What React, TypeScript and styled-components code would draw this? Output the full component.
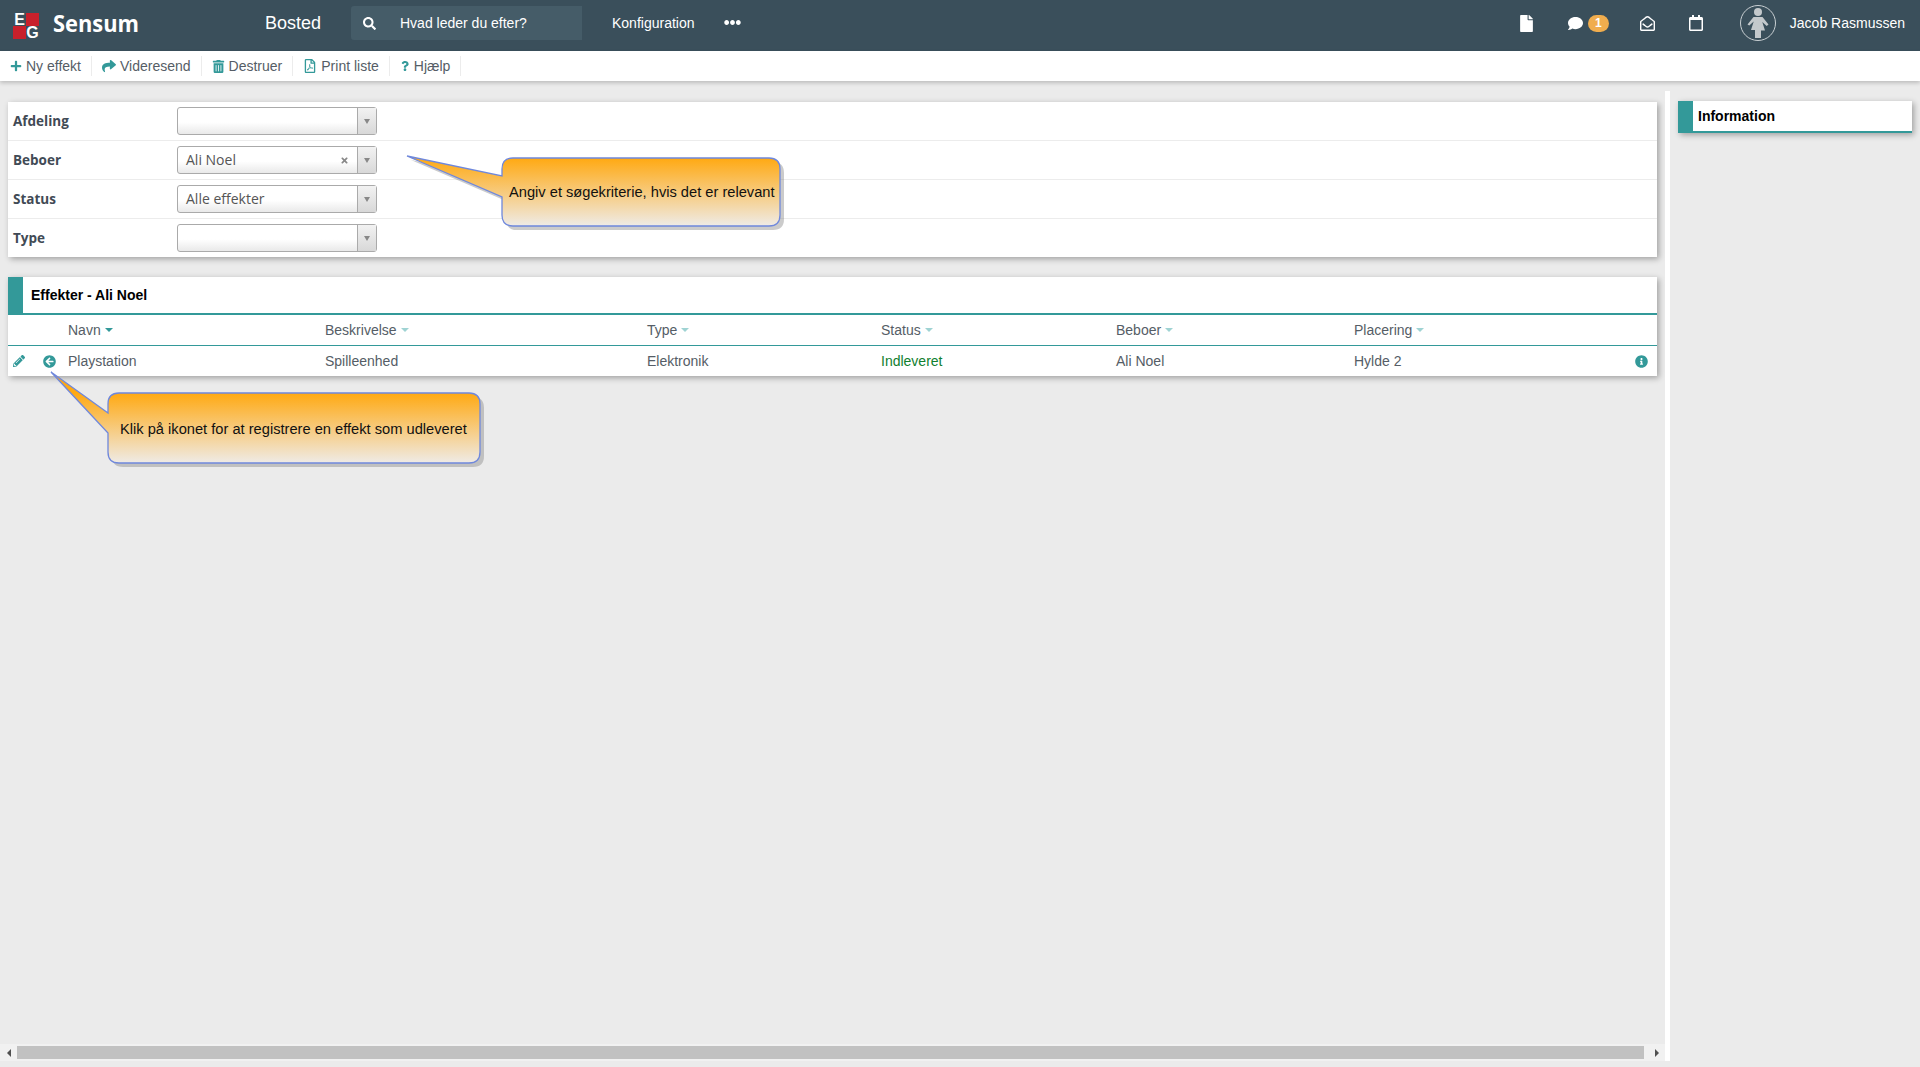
import { ReactNode } from "react"
import styled, { createGlobalStyle } from "styled-components"
import {
  FaArrowCircleLeft,
  FaComment,
  FaEllipsisH,
  FaFile,
  FaInfoCircle,
  FaPencilAlt,
  FaPlus,
  FaQuestion,
  FaRegCalendar,
  FaRegEnvelopeOpen,
  FaRegFilePdf,
  FaSearch,
  FaShare,
  FaTimes,
  FaTrashAlt
} from "react-icons/fa"

const TEAL = "#339999"
const TEXT = "#555d66"

const GlobalStyle = createGlobalStyle`
  html, body {
    margin: 0;
    padding: 0;
    background: #ebebeb;
    font-family: "Liberation Sans", Arial, sans-serif;
    font-size: 14px;
    overflow: hidden;
  }
  * { box-sizing: border-box; }
`

const Page = styled.div`
  position: relative;
  display: flex;
  flex-direction: column;
  width: 1920px;
  height: 1061px;
  background: #ebebeb;
`

const TopBar = styled.header`
  display: flex;
  align-items: center;
  flex: 0 0 51px;
  padding-bottom: 5px;
  background: #3a4f5b;
  color: #fff;
`

const Logo = styled.div`
  display: grid;
  grid-template-columns: 13px 13px;
  grid-template-rows: 13px 13px;
  margin: 5px 14px 0 13px;
`

const LogoCell = styled.span<{ $red?: boolean }>`
  display: flex;
  align-items: center;
  justify-content: center;
  background: ${p => (p.$red ? "#c8202b" : "transparent")};
  color: #fff;
  font: bold 16px "Liberation Sans", sans-serif;
  line-height: 13px;
`

const Brand = styled.span`
  width: 212px;
  font: bold 23px "Open Sans", sans-serif;
  transform: scaleX(0.95);
  transform-origin: left center;
`

const Module = styled.span`
  width: 86px;
  font-size: 18px;
`

const SearchBox = styled.div`
  display: flex;
  align-items: center;
  gap: 24px;
  width: 231px;
  height: 34px;
  padding-left: 12px;
  border-radius: 3px 0 0 3px;
  background: #455c68;
  font-size: 14px;
`

const NavLink = styled.span`
  margin-left: 30px;
  font-size: 14px;
`

const NavDots = styled.span`
  display: flex;
  margin-left: 29px;
  margin-bottom: 2px;
  font-size: 17px;
`

const NavRight = styled.div`
  display: flex;
  align-items: center;
  margin-left: auto;
  padding-right: 15px;
`

const NavIcon = styled.span<{ $gap: number }>`
  display: flex;
  margin-right: ${p => p.$gap}px;
  font-size: 15px;
`

const Badge = styled.span`
  display: flex;
  align-items: center;
  justify-content: center;
  width: 21px;
  height: 17px;
  margin-right: 31px;
  border-radius: 9px;
  background: #f0ad4e;
  font-size: 12px;
  font-weight: bold;
`

const Avatar = styled.span`
  display: flex;
  align-items: center;
  justify-content: center;
  width: 36px;
  height: 36px;
  margin-right: 14px;
  border: 1px solid #c9cfd3;
  border-radius: 50%;
`

const ToolBar = styled.nav`
  position: relative;
  z-index: 2;
  display: flex;
  align-items: center;
  flex: 0 0 30px;
  background: #fff;
  box-shadow: 0 2px 4px rgba(0, 0, 0, 0.2);
`

const ToolButton = styled.span`
  display: flex;
  align-items: center;
  gap: 4px;
  height: 20px;
  padding: 0 10px;
  border-right: 1px solid #ececec;
  color: ${TEXT};
  svg {
    color: ${TEAL};
  }
`

const Body = styled.div`
  display: flex;
  flex: 1;
  min-height: 0;
  padding-top: 10px;
`

const Main = styled.main`
  display: flex;
  flex-direction: column;
  flex: 0 0 1665px;
  padding-top: 11px;
`

const Side = styled.aside`
  flex: 1;
  margin-left: 5px;
  padding: 10px 8px 0 8px;
  box-shadow: -5px 0 0 #fff;
`

const Card = styled.section`
  width: 1649px;
  margin-left: 8px;
  background: #fff;
  box-shadow: 2px 2px 6px rgba(0, 0, 0, 0.32);
`

const FilterRow = styled.div`
  display: flex;
  align-items: center;
  height: 39px;
  padding-left: 5px;
  border-bottom: 1px solid #ececec;
  &:last-child {
    border-bottom: 0;
    height: 38px;
  }
`

const FilterLabel = styled.label`
  width: 164px;
  color: #414a55;
  font: bold 13.5px "Open Sans", sans-serif;
`

const Select = styled.div`
  display: flex;
  width: 200px;
  height: 28px;
  border: 1px solid #aaa;
  border-radius: 3px;
  background: linear-gradient(#fff 55%, #e9e9e9);
  color: #555;
  font: 14px "Open Sans", sans-serif;
`

const SelectValue = styled.span`
  flex: 1;
  align-self: center;
  padding: 0 0 2px 8px;
`

const SelectClear = styled.span`
  display: flex;
  align-self: center;
  margin-right: 8px;
  color: #888;
`

const SelectArrow = styled.span`
  display: flex;
  align-items: center;
  justify-content: center;
  width: 19px;
  border-left: 1px solid #aaa;
  background: linear-gradient(#f2f2f2, #d8d8d8);
  &::after {
    content: "";
    border-style: solid;
    border-width: 5px 3px 0;
    border-color: #888 transparent transparent;
  }
`

const TableCard = styled(Card)`
  margin-top: 20px;
`

const CardHeader = styled.h2`
  display: flex;
  align-items: center;
  height: 38px;
  margin: 0;
  padding-left: 8px;
  border-left: 15px solid ${TEAL};
  border-bottom: 2px solid ${TEAL};
  color: #000;
  font-size: 14px;
  font-weight: bold;
`

const TableRow = styled.div<{ $head?: boolean }>`
  display: grid;
  grid-template-columns: 30px 30px 257px 322px 234px 235px 238px 1fr 27px;
  align-items: center;
  height: ${p => (p.$head ? "31px" : "30px")};
  border-bottom: ${p => (p.$head ? `1px solid ${TEAL}` : "0")};
  color: ${TEXT};
`

const RowIcon = styled.span`
  display: flex;
  padding-left: 5px;
  color: ${TEAL};
`

const SortHead = styled.span<{ $active?: boolean }>`
  display: flex;
  align-items: center;
  gap: 4px;
  &::after {
    content: "";
    border-style: solid;
    border-width: 4px 4.5px 0;
    border-color: ${p => (p.$active ? TEAL : "#9fd3d3")} transparent transparent;
  }
`

const StatusText = styled.span`
  color: #10802f;
`

const SideHeader = styled.h2`
  display: flex;
  align-items: center;
  height: 32px;
  margin: 0;
  padding-left: 5px;
  border-left: 15px solid ${TEAL};
  border-bottom: 2px solid ${TEAL};
  background: #fff;
  color: #000;
  font-size: 14px;
  font-weight: bold;
  box-shadow: 2px 2px 6px rgba(0, 0, 0, 0.32);
`

const ScrollTrack = styled.div`
  display: flex;
  align-items: center;
  height: 17px;
  margin-top: auto;
  background: #f1f1f1;
`

const ScrollThumb = styled.div`
  width: 1627px;
  height: 13px;
  margin-right: auto;
  background: #c1c1c1;
`

const ScrollArrow = styled.span<{ $right?: boolean }>`
  width: 0;
  height: 0;
  margin: 0 6px 0 7px;
  border-style: solid;
  border-width: 4px 0 4px 4px;
  border-color: transparent transparent transparent #505050;
  transform: ${p => (p.$right ? "none" : "rotate(180deg)")};
`

const CalloutBox = styled.div<{ $x: number; $y: number; $w: number; $h: number }>`
  position: absolute;
  z-index: 5;
  left: ${p => p.$x}px;
  top: ${p => p.$y}px;
  width: ${p => p.$w}px;
  height: ${p => p.$h}px;
`

const CalloutShape = styled.svg`
  position: absolute;
  inset: 0;
  overflow: visible;
`

const CalloutText = styled.span<{ $left: number; $top: number }>`
  position: absolute;
  left: ${p => p.$left}px;
  top: ${p => p.$top}px;
  color: #111;
  font-size: 11pt;
  white-space: nowrap;
`

// bubble with tail, coordinates are local to the box, body starts at bodyX/bodyY
const Callout = (props: { id: string; x: number; y: number; w: number; h: number; bodyX: number; bodyY: number; tipX: number; tipY: number; tail: number[]; textLeft: number; textTop: number; children: ReactNode }) => {
  const { id, w, h, bodyX, bodyY, tipX, tipY, tail } = props
  const r = 11
  const d = `M${bodyX + r} ${bodyY}H${w - r}Q${w} ${bodyY} ${w} ${bodyY + r}V${h - r}Q${w} ${h} ${w - r} ${h}H${bodyX + r}Q${bodyX} ${h} ${bodyX} ${h - r}V${tail[1]}L${tipX} ${tipY}L${bodyX} ${tail[0]}V${bodyY + r}Q${bodyX} ${bodyY} ${bodyX + r} ${bodyY}Z`
  return (
    <CalloutBox $x={props.x} $y={props.y} $w={w} $h={h}>
      <CalloutShape width={w} height={h} viewBox={`0 0 ${w} ${h}`}>
        <defs>
          <linearGradient id={id} x1="0" y1={bodyY} x2="0" y2={h} gradientUnits="userSpaceOnUse">
            <stop offset="0" stopColor="#ffa912" />
            <stop offset="1" stopColor="#efebe6" />
          </linearGradient>
        </defs>
        <path d={d} fill="#8c8c8c" opacity="0.45" transform="translate(4 4)" />
        <path d={d} fill={`url(#${id})`} stroke="#6f88dc" strokeWidth="1.3" />
      </CalloutShape>
      <CalloutText $left={props.textLeft} $top={props.textTop}>
        {props.children}
      </CalloutText>
    </CalloutBox>
  )
}

const filters = [
  { label: "Afdeling", value: "" },
  { label: "Beboer", value: "Ali Noel", clear: true },
  { label: "Status", value: "Alle effekter" },
  { label: "Type", value: "" }
]

const columns = ["Navn", "Beskrivelse", "Type", "Status", "Beboer", "Placering"]

export default function App() {
  return (
    <Page>
      <GlobalStyle />
      <TopBar>
        <Logo>
          <LogoCell>E</LogoCell>
          <LogoCell $red />
          <LogoCell $red />
          <LogoCell>G</LogoCell>
        </Logo>
        <Brand>Sensum</Brand>
        <Module>Bosted</Module>
        <SearchBox>
          <FaSearch size={13} />
          Hvad leder du efter?
        </SearchBox>
        <NavLink>Konfiguration</NavLink>
        <NavDots>
          <FaEllipsisH />
        </NavDots>
        <NavRight>
          <NavIcon $gap={33}>
            <FaFile size={17} />
          </NavIcon>
          <NavIcon $gap={5}>
            <FaComment />
          </NavIcon>
          <Badge>1</Badge>
          <NavIcon $gap={33}>
            <FaRegEnvelopeOpen />
          </NavIcon>
          <NavIcon $gap={36}>
            <FaRegCalendar size={16} />
          </NavIcon>
          <Avatar>
            <svg width="22" height="30" viewBox="0 0 22 30" fill="#c4c9cc">
              <circle cx="11" cy="4" r="4" />
              <path d="M6.500 9h9l6 7.500-1.800 1.500-4.400-4 2.700 8.500H14v7.500H8V22H4l2.700-8.500-4.400 4L.5 16.500z" />
            </svg>
          </Avatar>
          Jacob Rasmussen
        </NavRight>
      </TopBar>
      <ToolBar>
        <ToolButton>
          <FaPlus size={12} />
          Ny effekt
        </ToolButton>
        <ToolButton>
          <FaShare size={14} />
          Videresend
        </ToolButton>
        <ToolButton>
          <FaTrashAlt size={13} />
          Destruer
        </ToolButton>
        <ToolButton>
          <FaRegFilePdf size={14} />
          Print liste
        </ToolButton>
        <ToolButton>
          <FaQuestion size={10} />
          Hjælp
        </ToolButton>
      </ToolBar>
      <Body>
        <Main>
          <Card>
            {filters.map(f => (
              <FilterRow key={f.label}>
                <FilterLabel>{f.label}</FilterLabel>
                <Select>
                  <SelectValue>{f.value}</SelectValue>
                  {f.clear && (
                    <SelectClear>
                      <FaTimes size={9} />
                    </SelectClear>
                  )}
                  <SelectArrow />
                </Select>
              </FilterRow>
            ))}
          </Card>
          <TableCard>
            <CardHeader>Effekter - Ali Noel</CardHeader>
            <TableRow $head>
              <span />
              <span />
              {columns.map((c, i) => (
                <SortHead key={c} $active={i === 0}>
                  {c}
                </SortHead>
              ))}
            </TableRow>
            <TableRow>
              <RowIcon>
                <FaPencilAlt size={12} />
              </RowIcon>
              <RowIcon>
                <FaArrowCircleLeft size={13} />
              </RowIcon>
              <span>Playstation</span>
              <span>Spilleenhed</span>
              <span>Elektronik</span>
              <StatusText>Indleveret</StatusText>
              <span>Ali Noel</span>
              <span>Hylde 2</span>
              <RowIcon>
                <FaInfoCircle size={13} />
              </RowIcon>
            </TableRow>
          </TableCard>
          <ScrollTrack>
            <ScrollArrow />
            <ScrollThumb />
            <ScrollArrow $right />
          </ScrollTrack>
        </Main>
        <Side>
          <SideHeader>Information</SideHeader>
        </Side>
      </Body>
      <Callout id="tipA" x={407} y={156} w={373} h={70} bodyX={95} bodyY={2} tipX={0} tipY={0} tail={[20, 41]} textLeft={102} textTop={28}>
        Angiv et søgekriterie, hvis det er relevant
      </Callout>
      <Callout id="tipB" x={51} y={372} w={429} h={91} bodyX={57} bodyY={21} tipX={0} tipY={0} tail={[41, 61]} textLeft={69} textTop={49}>
        Klik på ikonet for at registrere en effekt som udleveret
      </Callout>
    </Page>
  )
}
